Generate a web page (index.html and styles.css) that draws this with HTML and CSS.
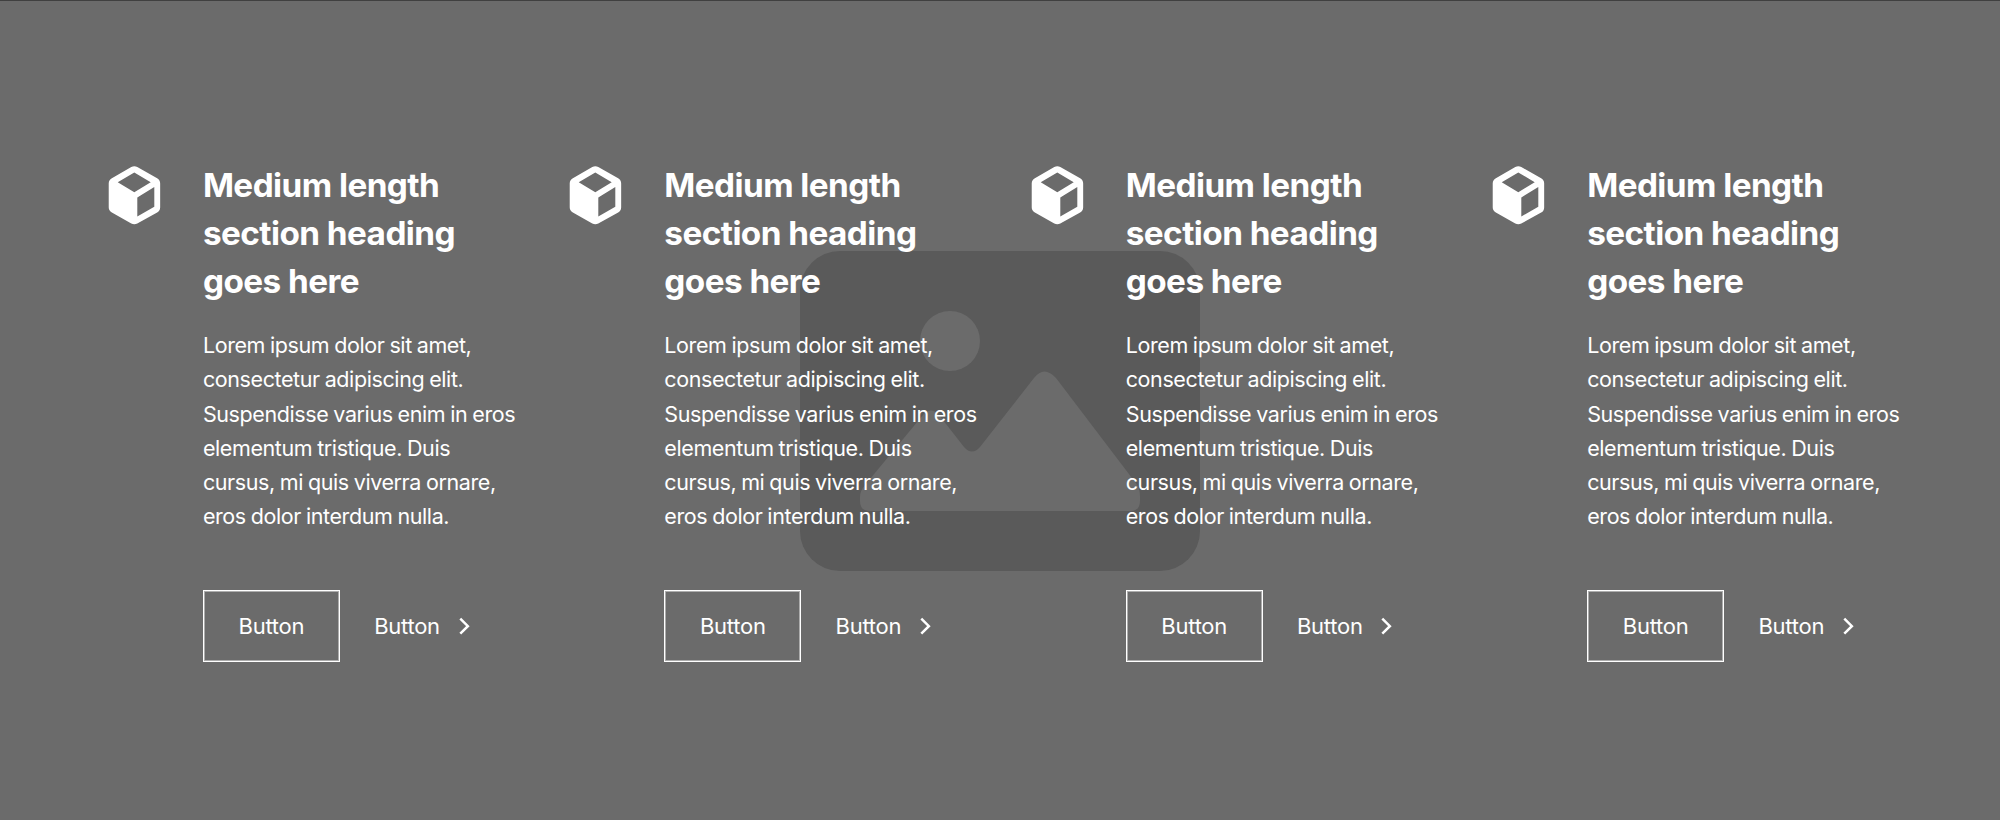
FILE: index.html
```
<!DOCTYPE html>
<html lang="en">
<head>
  <meta charset="UTF-8" />
  <meta name="viewport" content="width=device-width, initial-scale=1.0" />
  <title>Features</title>
  <link rel="stylesheet" href="styles.css">
</head>
<body>

  <!-- shared icons -->
  <svg class="sprite" aria-hidden="true">
    <symbol id="cube" viewBox="0 0 24 24">
      <path fill-rule="evenodd" d="M10.95 2.1a2.2 2.2 0 0 1 2.1 0l6.95 3.95a2.1 2.1 0 0 1 1.05 1.85v8.3a2.1 2.1 0 0 1-1.05 1.85l-6.95 3.8a2.2 2.2 0 0 1-2.1 0l-6.8-3.8a2.1 2.1 0 0 1-1.1-1.85V7.9a2.1 2.1 0 0 1 1.1-1.85zM12 4 6.2 7.45 12 10.9l5.75-3.45zM19 9.1l-5.95 3.65v6.7L19 16z" />
    </symbol>
    <symbol id="chevron" viewBox="0 0 24 24">
      <path d="M10 6.7 15.3 12 10 17.3" fill="none" stroke="#fff" stroke-width="1.75" />
    </symbol>
  </svg>

  <section class="features">
    <div class="background">
      <svg class="placeholder" viewBox="0 0 400 320">
        <rect class="frame" width="400" height="320" rx="40" />
        <circle class="shape" cx="150" cy="90" r="30" />
        <path class="shape" d="M60 250v-4q0-6 5-12l58-70q8-9 16 0l25 32q8 9 16 0l54-69q10-13 22 0l79 104q5 6 5 14v5q0 10-10 10H70q-10 0-10-10z" />
      </svg>
    </div>

    <div class="grid">
      <div class="feature">
        <svg class="cube"><use href="#cube" /></svg>
        <div class="content">
          <h3>Medium length section heading goes here</h3>
          <p>Lorem ipsum dolor sit amet, consectetur adipiscing elit. Suspendisse varius enim in eros elementum tristique. Duis<br> cursus, mi quis viverra ornare, eros dolor interdum nulla.</p>
          <div class="actions">
            <a class="btn">Button</a>
            <a class="link">Button <svg class="chevron"><use href="#chevron" /></svg></a>
          </div>
        </div>
      </div>

      <div class="feature">
        <svg class="cube"><use href="#cube" /></svg>
        <div class="content">
          <h3>Medium length section heading goes here</h3>
          <p>Lorem ipsum dolor sit amet, consectetur adipiscing elit. Suspendisse varius enim in eros elementum tristique. Duis<br> cursus, mi quis viverra ornare, eros dolor interdum nulla.</p>
          <div class="actions">
            <a class="btn">Button</a>
            <a class="link">Button <svg class="chevron"><use href="#chevron" /></svg></a>
          </div>
        </div>
      </div>

      <div class="feature">
        <svg class="cube"><use href="#cube" /></svg>
        <div class="content">
          <h3>Medium length section heading goes here</h3>
          <p>Lorem ipsum dolor sit amet, consectetur adipiscing elit. Suspendisse varius enim in eros elementum tristique. Duis<br> cursus, mi quis viverra ornare, eros dolor interdum nulla.</p>
          <div class="actions">
            <a class="btn">Button</a>
            <a class="link">Button <svg class="chevron"><use href="#chevron" /></svg></a>
          </div>
        </div>
      </div>

      <div class="feature">
        <svg class="cube"><use href="#cube" /></svg>
        <div class="content">
          <h3>Medium length section heading goes here</h3>
          <p>Lorem ipsum dolor sit amet, consectetur adipiscing elit. Suspendisse varius enim in eros elementum tristique. Duis<br> cursus, mi quis viverra ornare, eros dolor interdum nulla.</p>
          <div class="actions">
            <a class="btn">Button</a>
            <a class="link">Button <svg class="chevron"><use href="#chevron" /></svg></a>
          </div>
        </div>
      </div>
    </div>
  </section>

</body>
</html>
```
FILE: styles.css
```
* {
  box-sizing: border-box;
}

body {
  margin: 0;
  height: 820px;
  overflow: hidden;
  background-color: #6b6b6b;
  color: #fff;
  font-family: Inter, "Liberation Sans", sans-serif;
}

.sprite {
  display: none;
}

.features {
  position: relative;
  height: 821px;
  padding: 160px 100px;
  border-top: 1px solid #404040;
}

/* image placeholder behind the columns */
.background {
  position: absolute;
  inset: 0;
  display: flex;
  align-items: center;
  justify-content: center;
}

.placeholder {
  width: 400px;
  height: 320px;
}

.frame {
  fill: #5a5a5a;
}

.shape {
  fill: #6b6b6b;
}

.grid {
  position: relative;
  display: grid;
  grid-template-columns: repeat(4, 1fr);
  gap: 45.7px;
}

.feature {
  display: flex;
  gap: 34.3px;
}

.cube {
  flex: none;
  width: 68.6px;
  height: 68.6px;
  fill: #fff;
}

.content {
  flex: 1;
  min-width: 0;
}

h3 {
  margin: 0 0 23px;
  font-size: 33.3px;
  font-weight: 700;
  line-height: 48px;
  letter-spacing: -0.55px;
}

p {
  margin: 0 -10px 56.4px 0;
  font-size: 21.5px;
  line-height: 34.3px;
  letter-spacing: -0.4px;
  word-spacing: -0.7px;
}

.actions {
  display: flex;
  align-items: center;
  gap: 34.3px;
  font-size: 22px;
  line-height: 34.3px;
  letter-spacing: -0.25px;
}

.btn {
  padding: 18px 34.6px 17.7px;
  border: 1px solid #fff;
  box-shadow: inset 0 0 0 1px rgba(255, 255, 255, 0.45);
}

.link {
  display: flex;
  align-items: center;
  gap: 5.7px;
}

.chevron {
  width: 34.3px;
  height: 34.3px;
}
```
